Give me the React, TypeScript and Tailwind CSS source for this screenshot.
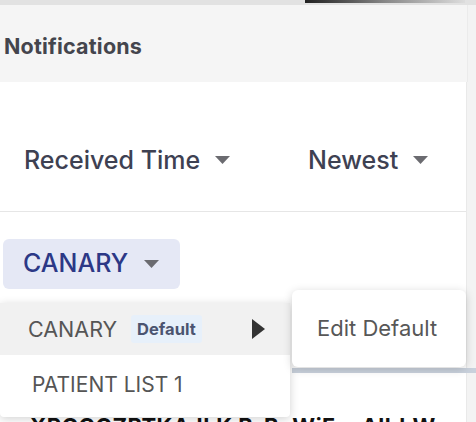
import React from "react";

const Caret = ({ className = "" }: { className?: string }) => (
  <svg width="17" height="10" viewBox="0 0 17 10" className={className}>
    <path d="M1 1 L16 1 L8.5 9 Z" fill="#6b6b70" />
  </svg>
);

export default function App() {
  return (
    <div
      className="relative w-[476px] h-[422px] overflow-hidden bg-[#f3f3f3]"
      style={{ fontFamily: "Inter, 'Noto Sans', sans-serif" }}
    >
      {/* top strip */}
      <div className="relative h-[5px] bg-[#e2e2e2]">
        <div className="absolute left-[305px] top-0 h-[3px] w-[160px] bg-gradient-to-r from-[#222] via-[#888] to-[#ddd]" />
      </div>
      {/* header */}
      <div className="h-[77px] bg-[#f5f5f5] flex items-center pl-[4px] pt-[5px] border-r border-[#ebebeb] w-[468px]">
        <span className="text-[21.5px] font-bold text-[#44454d] tracking-[0.2px]">Notifications</span>
      </div>
      {/* main panel */}
      <div className="w-[467px] bg-white border-r border-[#e9e9e9] h-[340px]">
        <div className="h-[130px] flex items-end border-b border-[#e6e6e6] pb-[35px]">
          <div className="flex items-center pl-[24px] w-[308px]">
            <span className="text-[25px] leading-[32px] font-medium text-[#3e4152]">Received Time</span>
            <Caret className="ml-[14px]" />
          </div>
          <div className="flex items-center">
            <span className="text-[25px] leading-[32px] font-medium text-[#3e4152]">Newest</span>
            <Caret className="ml-[14px]" />
          </div>
        </div>
        <div className="pt-[27px] pl-[3px]">
          <div className="w-[177px] h-[50px] rounded-[6px] bg-[#e5e8f5] flex items-center pl-[20px]">
            <span className="text-[25px] font-medium text-[#2c3886]">CANARY</span>
            <Caret className="ml-[15px]" />
          </div>
        </div>
      </div>

      {/* strip under submenu */}
      <div className="absolute left-[292px] top-[368px] w-[184px] h-[5px] bg-[#c9d1dc]" />

      {/* bottom partially hidden text */}
      <div className="absolute left-[30px] top-[413px] text-[22px] leading-[26px] font-bold text-[#111] whitespace-nowrap tracking-[0.5px]">
        XRCGGZBTKAJLK B-BxWiFm AlbbWn
      </div>

      {/* dropdown menu */}
      <div className="absolute left-0 top-[303px] w-[290px] h-[114px] bg-white shadow-[0_2px_10px_rgba(0,0,0,0.18)] rounded-b-[4px]">
        <div className="h-[52px] bg-[#f1f1f1] flex items-center pl-[28px] pr-[25px]">
          <span className="text-[21.5px] text-[#565656]">CANARY</span>
          <span className="ml-[14px] px-[6px] h-[28px] flex items-center rounded-[3px] bg-[#e7f0fa] text-[16.5px] font-bold text-[#4b5470]">
            Default
          </span>
          <svg width="13" height="20" viewBox="0 0 13 20" className="ml-auto">
            <path d="M0 0 L13 10 L0 20 Z" fill="#333" />
          </svg>
        </div>
        <div className="h-[62px] flex items-center pl-[32px] pb-[2px]">
          <span className="text-[21px] text-[#555]">PATIENT LIST 1</span>
        </div>
      </div>

      {/* submenu */}
      <div className="absolute left-[292px] top-[290px] w-[174px] h-[77px] bg-white rounded-[6px] shadow-[0_2px_10px_rgba(0,0,0,0.18)] flex items-center pl-[25px]">
        <span className="text-[22px] text-[#575757]">Edit Default</span>
      </div>
    </div>
  );
}
